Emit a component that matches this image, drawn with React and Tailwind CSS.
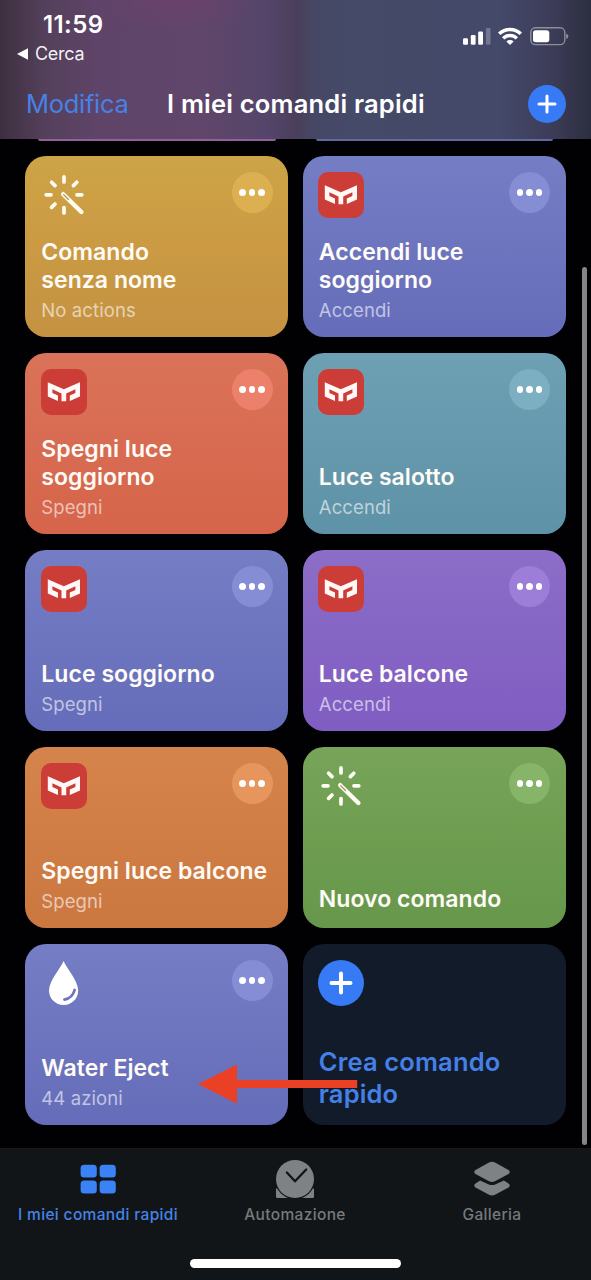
import React from 'react';

const shortcuts = [
  { title: ['Comando', 'senza nome'], subtitle: 'No actions', icon: 'wand', color: 'from-[#cda447] via-[#cb9a43] to-[#c49242]', dots: 'bg-[#dcb051]' },
  { title: ['Accendi luce', 'soggiorno'], subtitle: 'Accendi', icon: 'mask', color: 'from-[#757dc4] to-[#656dba]', dots: 'bg-[#858dd4]' },
  { title: ['Spegni luce', 'soggiorno'], subtitle: 'Spegni', icon: 'mask', color: 'from-[#da7359] to-[#d5644a]', dots: 'bg-[#ec806a]' },
  { title: ['Luce salotto'], subtitle: 'Accendi', icon: 'mask', color: 'from-[#6ea0b4] to-[#5e92a6]', dots: 'bg-[#7bafc1]' },
  { title: ['Luce soggiorno'], subtitle: 'Spegni', icon: 'mask', color: 'from-[#757dc4] to-[#656dba]', dots: 'bg-[#858dd4]' },
  { title: ['Luce balcone'], subtitle: 'Accendi', icon: 'mask', color: 'from-[#8c6dc7] to-[#7f5dc2]', dots: 'bg-[#9c7dd7]' },
  { title: ['Spegni luce balcone'], subtitle: 'Spegni', icon: 'mask', color: 'from-[#d5844b] to-[#cb7740]', dots: 'bg-[#e6955c]' },
  { title: ['Nuovo comando'], icon: 'wand', color: 'from-[#77a458] to-[#66974a]', dots: 'bg-[#86b468]' },
  { title: ['Water Eject'], subtitle: '44 azioni', icon: 'drop', color: 'from-[#757dc4] to-[#656dba]', dots: 'bg-[#858dd4]' },
];

const WandIcon = () => (
  <svg className="-ml-[0.5px] size-[46px]" viewBox="0 0 46 46" fill="none" stroke="#fffdf2" strokeWidth="3.7">
    <path d="M23 4.9v5.1M23 35.6v5.3M5.2 22.8h4.8M36 22.8h4.8M10.6 10.2l3.4 3.4M35.800 10.2l-3.4 3.4M10.6 35.4l3.4-3.4" strokeLinecap="round" />
    <path d="M22.2 22.2L40.4 40" strokeWidth="4.4" strokeLinecap="round" />
    <path d="M22.6 22.6L27.5 27.5" stroke="#a8915c" strokeWidth="1.3" strokeLinecap="round" />
  </svg>
);

const MaskIcon = () => (
  <svg className="-ml-[0.5px] size-[46px] rounded-[10px] bg-[#cc3d38]" viewBox="0 0 46 46">
    <path
      d="M6.8 13.3L22.8 20.2L39 13.3V27.6L28.8 31.9V26.4L34.4 24.1V20.2L25.2 24.4V32.2H20.5V24.4L11.4 20.2V24.1L17 26.400V31.9L6.8 27.6Z"
      fill="#fff8f6"
    />
  </svg>
);

const DropIcon = () => (
  <svg className="-ml-[0.5px] size-[46px]" viewBox="0 0 46 46">
    <path d="M22.6 1C25.5 8.5 37.2 20.5 37.2 30.5A14.6 14.6 0 0 1 8 30.5C8 20.5 19.7 8.5 22.6 1Z" fill="#fff" />
    <path d="M33.6 30C32.2 35.4 29 38.6 23.4 39.6" fill="none" stroke="#6b73be" strokeWidth="2.7" strokeLinecap="round" />
  </svg>
);

const icons = { wand: WandIcon, mask: MaskIcon, drop: DropIcon };

const ShortcutCard = ({ shortcut }) => {
  const Icon = icons[shortcut.icon];
  return (
    <div className={`flex h-[181px] flex-col justify-between rounded-[21px] bg-linear-to-b p-4 ${shortcut.color}`}>
      <div className="flex items-start justify-between">
        <Icon />
        <button className={`-mr-[0.4px] flex size-[41px] items-center justify-center gap-[3px] rounded-full ${shortcut.dots}`}>
          <span className="size-[6.5px] rounded-full bg-white" />
          <span className="size-[6.5px] rounded-full bg-white" />
          <span className="size-[6.5px] rounded-full bg-white" />
        </button>
      </div>
      <div className="-mb-px">
        <h2 className="text-[23px] leading-7 font-semibold tracking-[0.05px] whitespace-nowrap text-[#fffbf6]">
          {shortcut.title.map((line) => (
            <span key={line} className="block">{line}</span>
          ))}
        </h2>
        {shortcut.subtitle && (
          <p className="mt-[5px] text-[18.5px] leading-[23px] tracking-[0.1px] text-white/60">{shortcut.subtitle}</p>
        )}
      </div>
    </div>
  );
};

const StatusIcons = () => (
  <svg className="h-5 w-[108px]" viewBox="0 0 108 20">
    <g fill="#fff">
      <rect x="1" y="12.3" width="5" height="6.5" rx="1.3" />
      <rect x="8.8" y="9" width="4.8" height="9.8" rx="1.3" />
      <rect x="16.2" y="5.5" width="4.8" height="13.3" rx="1.3" />
      <rect x="23.9" y="2" width="4.6" height="16.8" rx="1.3" opacity="0.25" />
    </g>
    <g fill="none" stroke="#fff" strokeWidth="3.5">
      <path d="M37.2 7.8A15.5 15.5 0 0 1 58.8 7.8" />
      <path d="M41.2 12.4A9.5 9.5 0 0 1 54.8 12.4" />
    </g>
    <path d="M44.4 15.4A5.2 5.2 0 0 1 51.6 15.4L48 18.9Z" fill="#fff" />
    <rect x="68.8" y="1.8" width="34" height="16.8" rx="4.6" fill="none" stroke="#fff" strokeOpacity="0.42" strokeWidth="1.4" />
    <rect x="71" y="4.2" width="16.3" height="12" rx="2.6" fill="#fff" />
    <path d="M104.2 7.4Q106.3 8.3 106.3 10.2T104.2 13Z" fill="#fff" opacity="0.45" />
  </svg>
);

const Header = () => (
  <header className="h-[139px] bg-[radial-gradient(ellipse_90px_34px_at_172px_0,rgba(120,60,108,0.4),transparent),linear-gradient(to_right,#3d2f3f_0,#54405b_45px,#5e4468_95px,#60466a_200px,#55456a_265px,#4a3f5b_298px,#464764_312px,#454a68_350px,#444869_500px,#3d3d59_550px,#2c2e40_591px)] pt-[9px]">
    <div className="flex h-[62px] items-start justify-between pr-[21px] pl-[17px]">
      <div>
        <p className="pl-[26px] text-[24px] leading-8 font-semibold tracking-[0.4px] text-white">11:59</p>
        <div className="flex h-[26px] items-center">
          <svg className="h-3 w-[11px]" viewBox="0 0 11 12">
            <path d="M0 6L11 .3V11.7Z" fill="#fff" />
          </svg>
          <span className="pl-[7px] text-[18px] leading-[26px] tracking-[-0.3px] text-white/95">Cerca</span>
        </div>
      </div>
      <div className="pt-[17px]">
        <StatusIcons />
      </div>
    </div>
    <div className="grid h-[66px] grid-cols-[141px_1fr_38px] items-center pr-[25px] pl-[26px]">
      <span className="text-[25.5px] tracking-[-0.3px] text-[#4781e7]">Modifica</span>
      <h1 className="text-[25.5px] font-semibold tracking-[0.2px] whitespace-nowrap text-white">I miei comandi rapidi</h1>
      <button className="flex size-[38px] items-center justify-center rounded-full bg-[#377af6]">
        <svg className="size-5" viewBox="0 0 20 20" stroke="#fff" strokeWidth="3" strokeLinecap="round">
          <path d="M10 2v16M2 10h16" />
        </svg>
      </button>
    </div>
  </header>
);

const TabBar = () => (
  <nav className="h-[132px] border-t border-[#17171b] bg-[#111517]">
    <div className="grid h-[110px] grid-cols-3 pt-[10px] text-center text-[15.5px] leading-5 font-medium tracking-[0.35px] text-[#77797c]">
      <div className="flex flex-col items-center gap-[6px] pr-px text-[#4583e8]">
        <svg className="size-10" viewBox="0 0 40 40" fill="#3b82f7">
          <rect x="2.6" y="5.8" width="16.2" height="12.8" rx="3.5" />
          <rect x="21.6" y="5.8" width="16.2" height="12.8" rx="3.5" />
          <rect x="2.6" y="21.6" width="16.2" height="12.8" rx="3.5" />
          <rect x="21.6" y="21.6" width="16.2" height="12.8" rx="3.5" />
        </svg>
        <span>I miei comandi rapidi</span>
      </div>
      <div className="flex flex-col items-center gap-[6px] pr-px">
        <svg className="size-10" viewBox="0 0 40 40">
          <path d="M1 29.5H39V37.5Q39 39 37.5 39H2.5Q1 39 1 37.5Z" fill="#7f8285" />
          <circle cx="20" cy="20" r="20.2" fill="#111517" />
          <circle cx="20" cy="20" r="19" fill="#7f8285" />
          <path d="M11.9 13.5L20 22.3L31.2 10.5" fill="none" stroke="#111517" strokeWidth="2.3" strokeLinecap="round" strokeLinejoin="round" />
        </svg>
        <span>Automazione</span>
      </div>
      <div className="flex flex-col items-center gap-[6px] pr-px">
        <svg className="size-10" viewBox="0 0 40 40" fill="#7f8285">
          <path d="M17 3.5Q20 2.2 23 3.5L36.5 11Q39 13 36.5 15L23 22.3Q20 23.7 17 22.3L3.5 15Q1 13 3.5 11Z" />
          <path d="M8.1 21.5L16.3 25.2Q20 26.9 23.7 25.2L31.9 21.5L36.5 24.6Q39 26.5 36.5 28.5L23 35.8Q20 37.2 17 35.8L3.5 28.5Q1 26.5 3.5 24.6Z" />
        </svg>
        <span>Galleria</span>
      </div>
    </div>
    <div className="mx-auto h-[9px] w-[211px] rounded-full bg-white" />
  </nav>
);

export default function App() {
  return (
    <div className="relative flex h-[1280px] w-[591px] flex-col overflow-hidden bg-[#010104] font-['Inter','Liberation_Sans',sans-serif]">
      <Header />
      <main className="h-[1009px]">
        {/* bottom edge of the row scrolled under the header */}
        <div className="grid h-[17px] grid-cols-2 gap-[40px] px-[38px]">
          <div className="h-[1.5px] rounded-b-full bg-[#94609c]" />
          <div className="h-[1.5px] rounded-b-full bg-[#6268a4]" />
        </div>
        <div className="grid grid-cols-[263px_263px] gap-x-[14.5px] gap-y-4 pl-[25.3px]">
          {shortcuts.map((shortcut, index) => (
            <ShortcutCard key={index} shortcut={shortcut} />
          ))}
          <div className="flex h-[181px] flex-col justify-between rounded-[21px] bg-[#121b2a] p-4">
            <div className="-ml-[0.5px] flex size-[46px] items-center justify-center rounded-full bg-[#377af6]">
              <svg className="size-6" viewBox="0 0 24 24" stroke="#fff" strokeWidth="4" strokeLinecap="round">
                <path d="M12 2.5v19M2.5 12h19" />
              </svg>
            </div>
            <h2 className="-mb-px text-[25.5px] leading-8 font-semibold tracking-[0.15px] text-[#4480e6]">
              Crea comando<br />rapido
            </h2>
          </div>
        </div>
      </main>
      <TabBar />
      <div className="absolute top-[267px] right-[4.5px] h-[878px] w-[5px] rounded-full bg-[#858589]" />
      <svg className="absolute top-[1064px] left-[198px] h-10 w-[160px]" viewBox="0 0 160 40" fill="#ea4025">
        <path d="M0 20L39 .5V16H159.2V24H39V39.7Z" />
      </svg>
    </div>
  );
}
